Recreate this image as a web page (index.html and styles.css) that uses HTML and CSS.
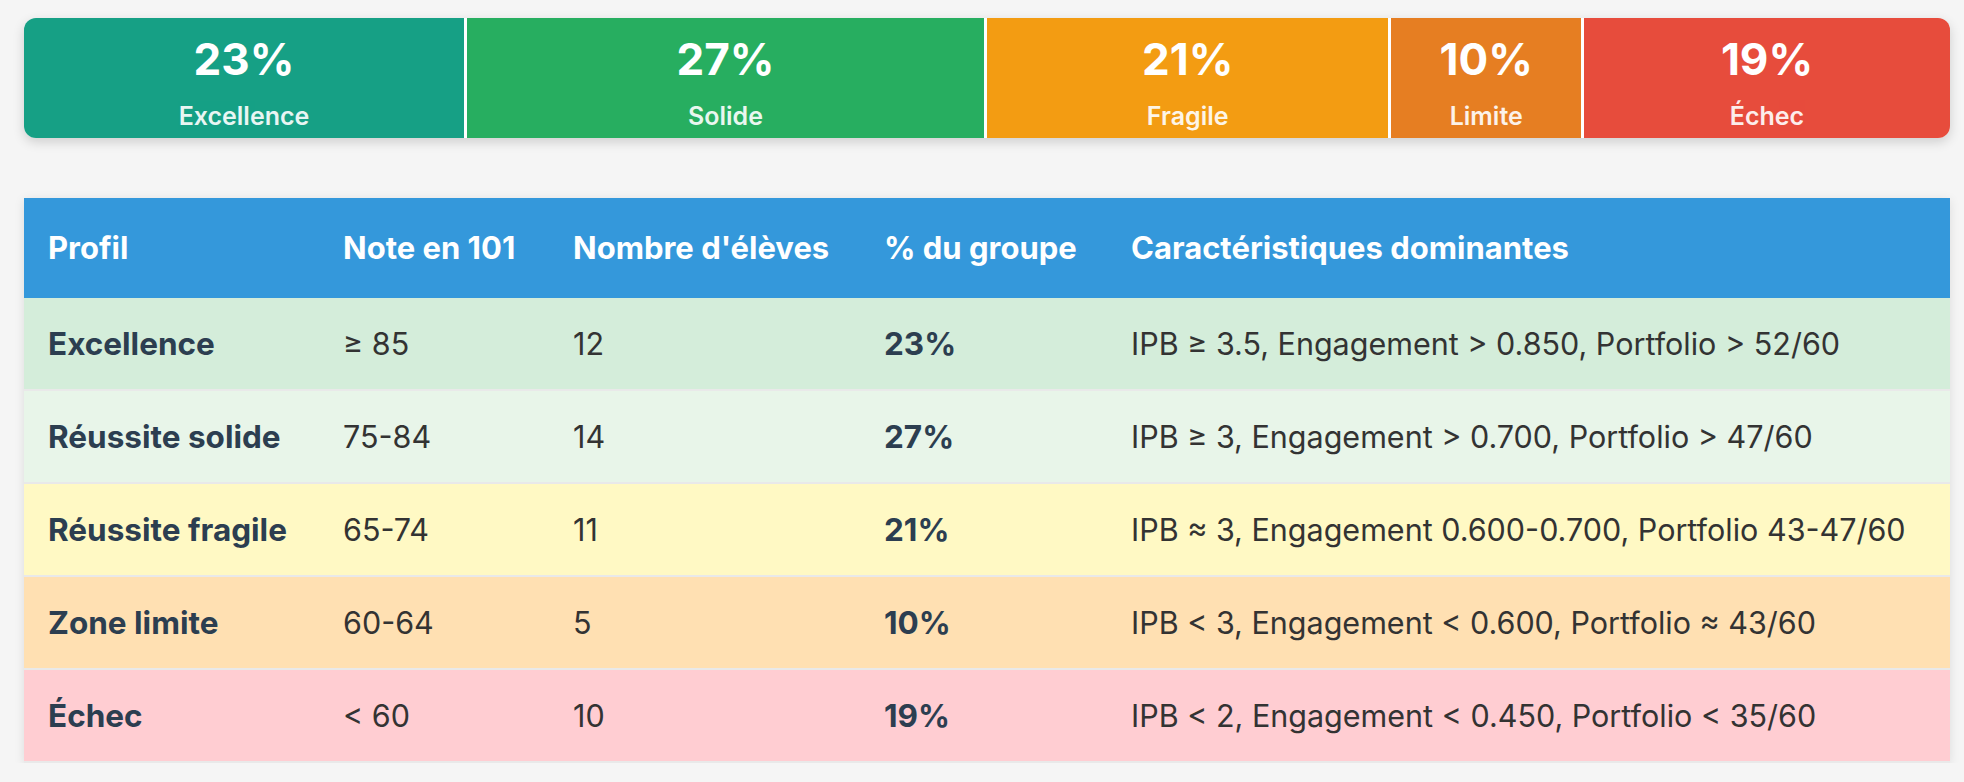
FILE: index.html
```html
<!DOCTYPE html>
<html lang="fr">
<head>
<meta charset="utf-8">
<title>Profils</title>
<link rel="stylesheet" href="styles.css">
</head>
<body>
<main class="page">
  <div class="dist-bar">
    <div class="seg seg-excellence" style="width:23%"><span class="seg-pct">23%</span><span class="seg-label">Excellence</span></div>
    <div class="seg seg-solide" style="width:27%"><span class="seg-pct">27%</span><span class="seg-label">Solide</span></div>
    <div class="seg seg-fragile" style="width:21%"><span class="seg-pct">21%</span><span class="seg-label">Fragile</span></div>
    <div class="seg seg-limite" style="width:10%"><span class="seg-pct">10%</span><span class="seg-label">Limite</span></div>
    <div class="seg seg-echec" style="width:19%"><span class="seg-pct">19%</span><span class="seg-label">Échec</span></div>
  </div>

  <table class="profiles">
    <colgroup>
      <col class="c1"><col class="c2"><col class="c3"><col class="c4"><col class="c5">
    </colgroup>
    <thead>
      <tr>
        <th>Profil</th>
        <th>Note en 101</th>
        <th>Nombre d'élèves</th>
        <th>% du groupe</th>
        <th>Caractéristiques dominantes</th>
      </tr>
    </thead>
    <tbody>
      <tr class="row-excellence">
        <td class="name">Excellence</td>
        <td>≥ 85</td>
        <td>12</td>
        <td class="pct">23%</td>
        <td>IPB ≥ 3.5, Engagement &gt; 0.850, Portfolio &gt; 52/60</td>
      </tr>
      <tr class="row-solide">
        <td class="name">Réussite solide</td>
        <td>75-84</td>
        <td>14</td>
        <td class="pct">27%</td>
        <td>IPB ≥ 3, Engagement &gt; 0.700, Portfolio &gt; 47/60</td>
      </tr>
      <tr class="row-fragile">
        <td class="name">Réussite fragile</td>
        <td>65-74</td>
        <td>11</td>
        <td class="pct">21%</td>
        <td>IPB ≈ 3, Engagement 0.600-0.700, Portfolio 43-47/60</td>
      </tr>
      <tr class="row-limite">
        <td class="name">Zone limite</td>
        <td>60-64</td>
        <td>5</td>
        <td class="pct">10%</td>
        <td>IPB &lt; 3, Engagement &lt; 0.600, Portfolio ≈ 43/60</td>
      </tr>
      <tr class="row-echec">
        <td class="name">Échec</td>
        <td>&lt; 60</td>
        <td>10</td>
        <td class="pct">19%</td>
        <td>IPB &lt; 2, Engagement &lt; 0.450, Portfolio &lt; 35/60</td>
      </tr>
    </tbody>
  </table>
</main>
</body>
</html>
```

FILE: styles.css
```css
* { box-sizing: border-box; }

html, body {
  margin: 0;
  padding: 0;
  background: #f5f5f5;
}

body {
  font-family: "Inter", "Roboto", "Liberation Sans", sans-serif;
  color: #333333;
}

.page {
  padding: 18px 14px 0 24px;
}

.dist-bar {
  display: flex;
  height: 120px;
  border-radius: 12px;
  overflow: hidden;
  box-shadow: 0 4px 12px rgba(0, 0, 0, 0.16);
  margin-bottom: 60px;
}

.seg {
  display: flex;
  flex-direction: column;
  align-items: center;
  padding-top: 15px;
  color: #ffffff;
  border-right: 3px solid #ffffff;
}

.seg:last-child { border-right: none; }

.seg-pct {
  font-size: 44px;
  line-height: 52px;
  font-weight: 700;
}

.seg-label {
  margin-top: 16px;
  font-size: 25px;
  line-height: 30px;
  font-weight: 600;
  opacity: 0.9;
}

.seg-excellence { background: #16a085; }
.seg-solide { background: #27ae60; }
.seg-fragile { background: #f39c12; }
.seg-limite { background: #e67e22; }
.seg-echec { background: #e74c3c; }

.profiles {
  width: 100%;
  border-collapse: collapse;
  table-layout: fixed;
  background: #ffffff;
  box-shadow: 0 2px 10px rgba(0, 0, 0, 0.1);
}

.c1 { width: 295px; }
.c2 { width: 230px; }
.c3 { width: 311px; }
.c4 { width: 247px; }
.c5 { width: auto; }

.profiles th {
  background: #3498db;
  color: #ffffff;
  text-align: left;
  font-size: 31px;
  font-weight: 700;
  line-height: 40px;
  padding: 30px 24px;
  white-space: nowrap;
}

.profiles td {
  font-size: 30.5px;
  line-height: 43px;
  padding: 24px 24px;
  border-bottom: 2px solid #e9e9e9;
  white-space: nowrap;
  color: #333333;
}

.profiles td.name,
.profiles td.pct {
  font-size: 31.5px;
  font-weight: 700;
  color: #2c3e50;
}

.row-excellence td { background: #d4edda; }
.row-solide td { background: #e8f5e9; }
.row-fragile td { background: #fff9c4; }
.row-limite td { background: #ffe0b2; }
.row-echec td { background: #ffcdd2; }
```
